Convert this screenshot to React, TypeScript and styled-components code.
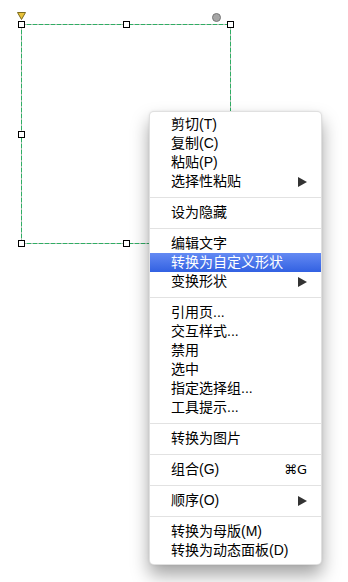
import React from "react";
import styled, { createGlobalStyle } from "styled-components";

const Global = createGlobalStyle`
  html, body { margin: 0; padding: 0; background: #ffffff; }
  body { font-family: "Liberation Sans", "Noto Sans CJK SC", sans-serif; }
`;

const Canvas = styled.div`
  position: relative;
  width: 348px;
  height: 582px;
  overflow: hidden;
  background: #fff;
`;

/* Selection frame on the free canvas: a 3x3 grid whose corner/edge cells hold the handles */
const Frame = styled.div`
  position: absolute;
  left: 18px;
  top: 21px;
  width: 216px;
  height: 226px;
  display: grid;
  grid-template-columns: 7px 1fr 7px;
  grid-template-rows: 7px 1fr 7px;
  &::before {
    content: "";
    position: absolute;
    inset: 3px;
    background:
      repeating-linear-gradient(90deg, #2fae63 0 4px, #a9bdb0 4px 6px) top left / 100% 1px no-repeat,
      repeating-linear-gradient(90deg, #2fae63 0 4px, #a9bdb0 4px 6px) bottom left / 100% 1px no-repeat,
      repeating-linear-gradient(180deg, #2fae63 0 4px, #a9bdb0 4px 6px) top left / 1px 100% no-repeat,
      repeating-linear-gradient(180deg, #2fae63 0 4px, #a9bdb0 4px 6px) top right / 1px 100% no-repeat;
  }
`;

const Handle = styled.div<{ $col: number; $row: number }>`
  grid-column: ${(p) => p.$col};
  grid-row: ${(p) => p.$row};
  justify-self: center;
  align-self: center;
  width: 7px;
  height: 7px;
  box-sizing: border-box;
  border: 1px solid #000;
  background: #fff;
  z-index: 1;
`;

const Rotate = styled.div`
  position: absolute;
  left: 212px;
  top: 13px;
  width: 9px;
  height: 9px;
  border-radius: 50%;
  box-sizing: border-box;
  background: #a6a6a6;
  border: 1px solid #777;
`;

const Marker = styled.svg`
  position: absolute;
  left: 17px;
  top: 12px;
`;

const Menu = styled.div`
  position: absolute;
  left: 149px;
  top: 111px;
  width: 173px;
  box-sizing: border-box;
  padding: 3px 0 4px;
  display: flex;
  flex-direction: column;
  background: #fff;
  border: 1px solid rgba(0, 0, 0, 0.12);
  border-radius: 5px;
  box-shadow: 0 10px 18px rgba(0, 0, 0, 0.36), 0 0 3px rgba(0, 0, 0, 0.08);
`;

const Item = styled.div<{ $active?: boolean }>`
  display: flex;
  align-items: center;
  justify-content: space-between;
  height: 19px;
  line-height: 19px;
  padding: 0 13px 0 21px;
  font-size: 14px;
  color: ${(p) => (p.$active ? "#fff" : "#000")};
  background: ${(p) =>
    p.$active ? "linear-gradient(#648af3, #3261e2)" : "transparent"};
  white-space: nowrap;
`;

const Sep = styled.div`
  height: 1px;
  margin: 6px 0 5px;
  background: #e2e2e2;
`;

const Arrow = styled.span`
  width: 0;
  height: 0;
  border-top: 5px solid transparent;
  border-bottom: 5px solid transparent;
  border-left: 9px solid #333;
  margin-right: 1px;
`;

const Shortcut = styled.span`
  font-size: 14px;
  margin-right: 1px;
  font-family: "DejaVu Sans", "Liberation Sans", sans-serif;
  font-size: 13px;
`;

type Entry =
  | { sep: true }
  | { label: string; sub?: boolean; key?: string; active?: boolean };

const entries: Entry[] = [
  { label: "剪切(T)" },
  { label: "复制(C)" },
  { label: "粘贴(P)" },
  { label: "选择性粘贴", sub: true },
  { sep: true },
  { label: "设为隐藏" },
  { sep: true },
  { label: "编辑文字" },
  { label: "转换为自定义形状", active: true },
  { label: "变换形状", sub: true },
  { sep: true },
  { label: "引用页..." },
  { label: "交互样式..." },
  { label: "禁用" },
  { label: "选中" },
  { label: "指定选择组..." },
  { label: "工具提示..." },
  { sep: true },
  { label: "转换为图片" },
  { sep: true },
  { label: "组合(G)", key: "⌘G" },
  { sep: true },
  { label: "顺序(O)", sub: true },
  { sep: true },
  { label: "转换为母版(M)" },
  { label: "转换为动态面板(D)" },
];

const handles: [number, number][] = [
  [1, 1],
  [2, 1],
  [3, 1],
  [1, 2],
  [1, 3],
  [2, 3],
];

export default function App() {
  return (
    <Canvas>
      <Global />
      <Frame>
        {handles.map(([c, r]) => (
          <Handle key={`${c}-${r}`} $col={c} $row={r} />
        ))}
      </Frame>
      <Marker width="9" height="8" viewBox="0 0 9 8">
        <path d="M0.5 0.5 H8.5 L4.5 7.5 Z" fill="#e8c23a" stroke="#7a6a1e" strokeWidth="1" />
      </Marker>
      <Rotate />
      <Menu>
        {entries.map((e, i) =>
          "sep" in e ? (
            <Sep key={i} />
          ) : (
            <Item key={i} $active={e.active}>
              <span>{e.label}</span>
              {e.sub && <Arrow />}
              {e.key && <Shortcut>{e.key}</Shortcut>}
            </Item>
          )
        )}
      </Menu>
    </Canvas>
  );
}
